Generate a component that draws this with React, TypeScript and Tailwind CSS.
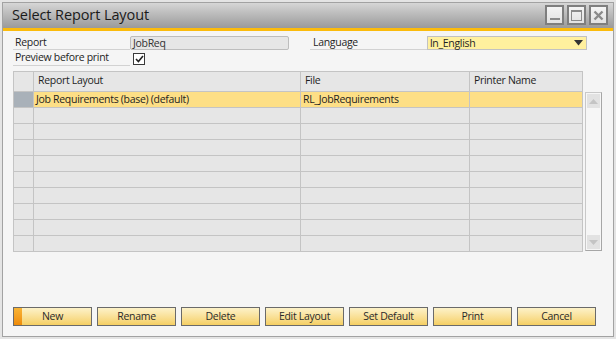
import React from "react";

export default function App() {
  const buttons = ["New", "Rename", "Delete", "Edit Layout", "Set Default", "Print", "Cancel"];

  const rows = Array.from({ length: 10 }, (_, i) =>
    i === 0
      ? { layout: "Job Requirements (base) (default)", file: "RL_JobRequirements", printer: "" }
      : { layout: "", file: "", printer: "" }
  );

  return (
    <div className="w-[616px] h-[339px] bg-[#e4e4e4] p-[2px] font-['Open_Sans',sans-serif] text-[10.5px] tracking-[-0.3px] text-[#1e1e1e]">
      <div className="h-full flex flex-col border border-[#a2a2a2] bg-[#f5f5f5]">
        {/* Title bar */}
        <div className="h-[25px] flex items-center bg-gradient-to-b from-[#d6d6d6] to-[#9a9a9a] pl-[9px] pr-[5px]">
          <span className="text-[14.5px] tracking-[-0.1px] text-[#1a1a1a] leading-none">Select Report Layout</span>
          <div className="ml-auto flex gap-[3px] self-start mt-[2px]">
            <div className="w-[19px] h-[20px] border-2 border-[#7e7e7e] bg-gradient-to-b from-[#f4f4f4] to-[#e2e2e2] flex items-end justify-center pb-[3px]">
              <div className="w-[10px] h-[2px] bg-[#8a8a8a]" />
            </div>
            <div className="w-[19px] h-[20px] border-2 border-[#7e7e7e] bg-gradient-to-b from-[#f4f4f4] to-[#e2e2e2] flex items-center justify-center">
              <div className="w-[11px] h-[11px] border border-t-2 border-[#8a8a8a]" />
            </div>
            <div className="w-[19px] h-[20px] border-2 border-[#7e7e7e] bg-gradient-to-b from-[#f4f4f4] to-[#e2e2e2] flex items-center justify-center">
              <svg width="11" height="11" viewBox="0 0 11 11">
                <path d="M1.5 1.5 L9.5 9.5 M9.5 1.5 L1.5 9.5" stroke="#8a8a8a" strokeWidth="2.4" />
              </svg>
            </div>
          </div>
        </div>
        <div className="h-[3px] bg-[#fbbb0c]" />

        {/* Body */}
        <div className="flex-1 flex flex-col pl-[10px] pr-[8px] pt-[5px] pb-[10px]">
          {/* Report / Language */}
          <div className="flex h-[14px]">
            <div className="w-[117px] border-b border-[#d2d2d2] pl-[2px] leading-[12px]">Report</div>
            <div className="w-[159px] border border-[#bdbdbd] rounded-[2px] bg-[#e6e6e6] pl-[2px] leading-[12px] text-[#333]">
              JobReq
            </div>
            <div className="ml-[21px] w-[117px] border-b border-[#d2d2d2] pl-[3px] leading-[12px]">Language</div>
            <div className="w-[160px] border border-[#c2c2c2] bg-[#fff09e] pl-[2px] leading-[12px] flex items-center">
              <span className="flex-1">ln_English</span>
              <svg width="9" height="6" viewBox="0 0 9 6" className="mr-[3px]">
                <path d="M0 0 H9 L4.5 5.5 Z" fill="#333" />
              </svg>
            </div>
          </div>

          {/* Preview */}
          <div className="flex h-[15px] mt-[1px]">
            <div className="w-[117px] border-b border-[#d2d2d2] pl-[2px] leading-[13px]">Preview before print</div>
            <div className="ml-[3px] mt-[2px] w-[12px] h-[12px] border border-[#3a3a3a] bg-white flex items-center justify-center">
              <svg width="9" height="8" viewBox="0 0 9 8">
                <path d="M1 4 L3.4 6.5 L8 1" stroke="#222" strokeWidth="1.6" fill="none" />
              </svg>
            </div>
          </div>

          {/* Grid */}
          <div className="flex mt-[5px]">
            <div className="border-l border-t border-[#c4c4c4] bg-[#e6e6e6]">
              <div className="flex h-[20px]">
                <div className="w-[20px] border-r border-b border-[#c4c4c4]" />
                <div className="w-[267px] border-r border-b border-[#c4c4c4] pl-[4px] leading-[16px]">Report Layout</div>
                <div className="w-[169px] border-r border-b border-[#c4c4c4] pl-[4px] leading-[16px]">File</div>
                <div className="w-[113px] border-r border-b border-[#c4c4c4] pl-[4px] leading-[16px]">Printer Name</div>
              </div>
              {rows.map((row, i) => (
                <div key={i} className={`flex h-[16px] ${i === 0 ? "bg-[#fddf86]" : ""}`}>
                  <div
                    className={`w-[20px] border-r border-b border-[#c4c4c4] ${i === 0 ? "bg-[#a9b1b9]" : "bg-[#e6e6e6]"}`}
                  />
                  <div className="w-[267px] border-r border-b border-[#c4c4c4] pl-[2px] leading-[15px]">{row.layout}</div>
                  <div className="w-[169px] border-r border-b border-[#c4c4c4] pl-[2px] leading-[15px]">{row.file}</div>
                  <div className="w-[113px] border-r border-b border-[#c4c4c4] pl-[2px] leading-[15px]">{row.printer}</div>
                </div>
              ))}
            </div>

            {/* Scrollbar */}
            <div className="ml-[2px] mt-[21px] w-[17px] h-[159px] border border-[#c8c8c8] border-r-[#a6a6a6] border-b-[#a6a6a6] bg-[#f6f6f6] p-[1px] flex flex-col justify-between">
              <div className="h-[14px] bg-[#e2e2e2] flex items-center justify-center">
                <svg width="9" height="5" viewBox="0 0 9 5">
                  <path d="M0 5 H9 L4.5 0 Z" fill="#c4c4c4" />
                </svg>
              </div>
              <div className="h-[14px] bg-[#e2e2e2] flex items-center justify-center">
                <svg width="9" height="5" viewBox="0 0 9 5">
                  <path d="M0 0 H9 L4.5 5 Z" fill="#c4c4c4" />
                </svg>
              </div>
            </div>
          </div>

          {/* Buttons */}
          <div className="mt-auto flex gap-[5px]">
            {buttons.map((label, i) => (
              <div
                key={label}
                className="relative w-[79px] h-[19px] border border-[#6a6a6a] bg-gradient-to-b from-[#fdf2c8] to-[#f5cf62] flex items-center justify-center text-[#2a2a2a]"
              >
                {i === 0 && (
                  <div className="absolute left-0 top-0 bottom-0 w-[8px] bg-gradient-to-b from-[#f8b434] to-[#ee8a06]" />
                )}
                <span className="relative">{label}</span>
              </div>
            ))}
          </div>
        </div>
      </div>
    </div>
  );
}
